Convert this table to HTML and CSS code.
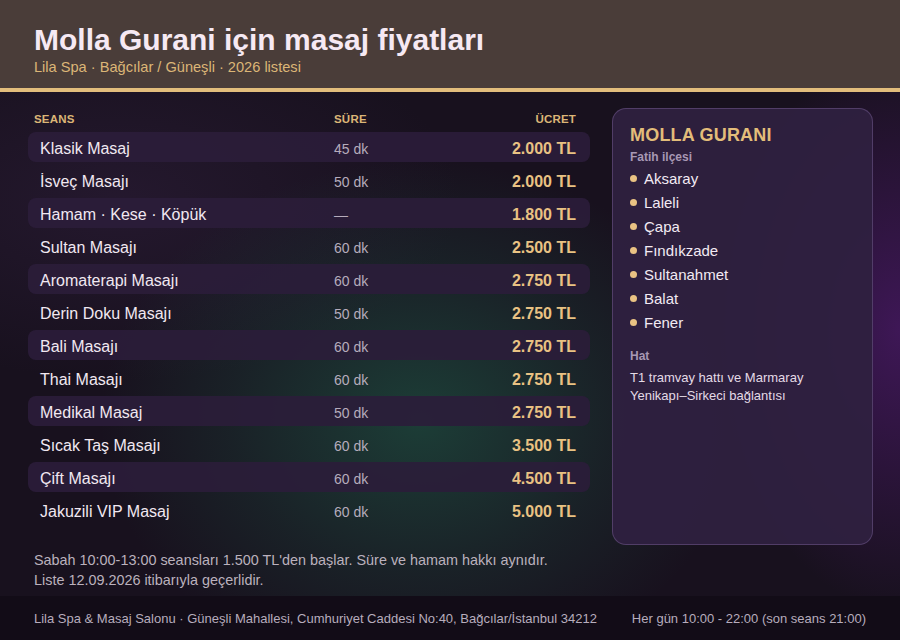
FILE: index.html
```html
<!DOCTYPE html>
<html lang="tr">
<head>
<meta charset="utf-8">
<link rel="stylesheet" href="styles.css">
</head>
<body>
<div class="page">
  <header class="top">
    <h1 class="title">Molla Gurani için masaj fiyatları</h1>
    <div class="sub">Lila Spa · Bağcılar / Güneşli · 2026 listesi</div>
  </header>
  <main class="main">
    <section class="left">
      <div class="thead">
        <span>SEANS</span><span>SÜRE</span><span class="r">ÜCRET</span>
      </div>
      <div class="rows">
        <div class="row alt"><span class="name">Klasik Masaj</span><span class="dur">45 dk</span><span class="price">2.000 TL</span></div>
        <div class="row"><span class="name">İsveç Masajı</span><span class="dur">50 dk</span><span class="price">2.000 TL</span></div>
        <div class="row alt"><span class="name">Hamam · Kese · Köpük</span><span class="dur">—</span><span class="price">1.800 TL</span></div>
        <div class="row"><span class="name">Sultan Masajı</span><span class="dur">60 dk</span><span class="price">2.500 TL</span></div>
        <div class="row alt"><span class="name">Aromaterapi Masajı</span><span class="dur">60 dk</span><span class="price">2.750 TL</span></div>
        <div class="row"><span class="name">Derin Doku Masajı</span><span class="dur">50 dk</span><span class="price">2.750 TL</span></div>
        <div class="row alt"><span class="name">Bali Masajı</span><span class="dur">60 dk</span><span class="price">2.750 TL</span></div>
        <div class="row"><span class="name">Thai Masajı</span><span class="dur">60 dk</span><span class="price">2.750 TL</span></div>
        <div class="row alt"><span class="name">Medikal Masaj</span><span class="dur">50 dk</span><span class="price">2.750 TL</span></div>
        <div class="row"><span class="name">Sıcak Taş Masajı</span><span class="dur">60 dk</span><span class="price">3.500 TL</span></div>
        <div class="row alt"><span class="name">Çift Masajı</span><span class="dur">60 dk</span><span class="price">4.500 TL</span></div>
        <div class="row"><span class="name">Jakuzili VIP Masaj</span><span class="dur">60 dk</span><span class="price">5.000 TL</span></div>
      </div>
      <div class="notes">
        <p>Sabah 10:00-13:00 seansları 1.500 TL'den başlar. Süre ve hamam hakkı aynıdır.</p>
        <p>Liste 12.09.2026 itibarıyla geçerlidir.</p>
      </div>
    </section>
    <aside class="card">
      <h2 class="card-title">MOLLA GURANI</h2>
      <div class="label">Fatih ilçesi</div>
      <ul class="places">
        <li>Aksaray</li>
        <li>Laleli</li>
        <li>Çapa</li>
        <li>Fındıkzade</li>
        <li>Sultanahmet</li>
        <li>Balat</li>
        <li>Fener</li>
      </ul>
      <div class="label hat">Hat</div>
      <p class="line">T1 tramvay hattı ve Marmaray Yenikapı–Sirkeci bağlantısı</p>
    </aside>
  </main>
  <footer class="foot">
    <span>Lila Spa &amp; Masaj Salonu · Güneşli Mahallesi, Cumhuriyet Caddesi No:40, Bağcılar/İstanbul 34212</span>
    <span>Her gün 10:00 - 22:00 (son seans 21:00)</span>
  </footer>
</div>
</body>
</html>
```
FILE: styles.css
```css
* { box-sizing: border-box; }
html, body { margin: 0; padding: 0; }
body {
  font-family: "Liberation Sans", Arial, sans-serif;
  background: #16101c;
  color: #eee4ee;
}
.page {
  width: 900px;
  height: 640px;
  display: flex;
  flex-direction: column;
  overflow: hidden;
  background:
    radial-gradient(ellipse 320px 260px at 420px 420px, rgba(30, 80, 65, 0.7), rgba(30, 80, 65, 0.25) 60%, transparent 100%),
    radial-gradient(ellipse 180px 280px at 900px 330px, rgba(75, 25, 105, 0.75), transparent 100%),
    radial-gradient(ellipse 340px 180px at 120px 200px, rgba(55, 35, 70, 0.4), transparent 100%),
    #18111e;
}
.top {
  background: #4a3d39;
  border-bottom: 4px solid #e2bd7c;
  padding: 23px 34px 11px;
  height: 92px;
}
.title {
  margin: 0;
  font-size: 30px;
  line-height: 34px;
  font-weight: 700;
  color: #f6e9f3;
}
.sub {
  margin-top: 1px;
  font-size: 14.6px;
  line-height: 18px;
  color: #dcb677;
}
.main {
  flex: 1;
  display: flex;
  gap: 22px;
  padding: 16px 27px 0 28px;
}
.left {
  width: 562px;
  display: flex;
  flex-direction: column;
}
.thead {
  display: grid;
  grid-template-columns: 300px 1fr 120px;
  padding: 1px 14px 0 6px;
  font-size: 11.5px;
  font-weight: 700;
  letter-spacing: 0.2px;
  color: #dcb677;
  height: 24px;
  line-height: 20px;
}
.thead .r { text-align: right; }
.rows {
  display: flex;
  flex-direction: column;
  gap: 3px;
}
.row {
  display: grid;
  grid-template-columns: 294px 1fr 120px;
  align-items: center;
  height: 30px;
  padding: 4px 14px 0 12px;
  border-radius: 8px;
}
.row.alt { background: rgba(43, 29, 58, 0.9); }
.name { font-size: 16px; color: #f1e8f1; }
.dur { font-size: 14px; color: #b6acbc; }
.price { font-size: 16px; font-weight: 700; color: #e9c283; text-align: right; }
.notes {
  margin-top: 25px;
  padding-left: 6px;
  font-size: 14.4px;
  line-height: 20px;
  color: #bbb1bd;
}
.notes p { margin: 0; }
.card {
  width: 261px;
  height: 437px;
  background: rgba(47, 32, 64, 0.94);
  border: 1px solid rgba(150, 120, 180, 0.35);
  border-radius: 14px;
  padding: 14px 17px;
}
.card-title {
  margin: 0;
  font-size: 18px;
  line-height: 24px;
  font-weight: 700;
  color: #e3bd7a;
  letter-spacing: 0.2px;
}
.label {
  margin-top: 2px;
  font-size: 12px;
  font-weight: 700;
  line-height: 16px;
  color: #a898b4;
}
.places {
  list-style: none;
  margin: 1px 0 0;
  padding: 0;
}
.places li {
  display: flex;
  align-items: center;
  gap: 7px;
  height: 24px;
  font-size: 15px;
  color: #f2eaf3;
}
.places li::before {
  content: "";
  width: 7px;
  height: 7px;
  border-radius: 50%;
  background: #e9c283;
}
.label.hat { margin-top: 14px; }
.line {
  margin: 5px 0 0;
  font-size: 13px;
  line-height: 18px;
  color: #e4dae6;
}
.foot {
  height: 44px;
  background: #120c17;
  display: flex;
  justify-content: space-between;
  align-items: center;
  padding: 0 34px;
  font-size: 13px;
  color: #b7adbd;
}
```
